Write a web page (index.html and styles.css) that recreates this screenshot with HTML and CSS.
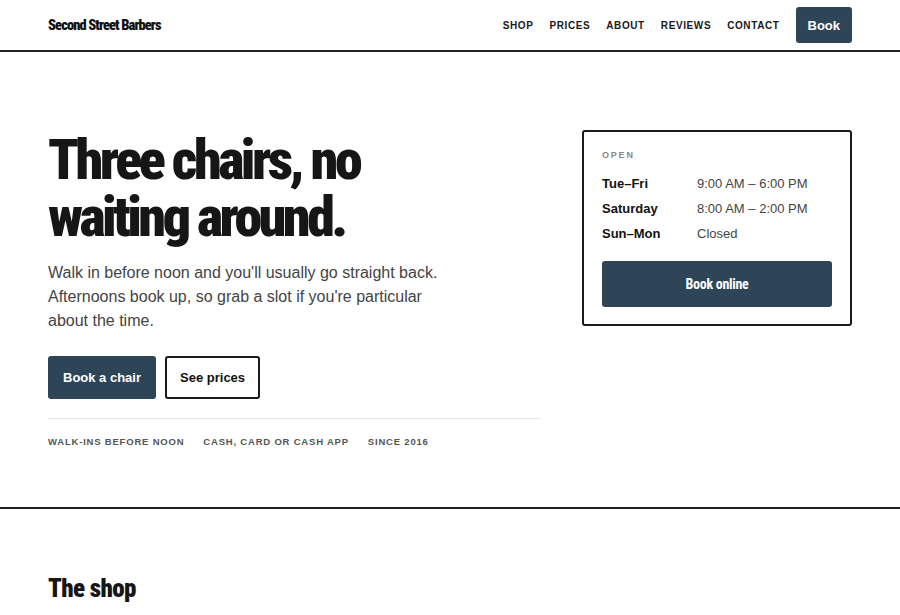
FILE: index.html
```html
<!DOCTYPE html>
<html lang="en">
<head>
<meta charset="utf-8">
<title>Second Street Barbers</title>
<link rel="stylesheet" href="styles.css">
</head>
<body>
<header class="site-header">
  <div class="container header-inner">
    <a class="logo" href="#">Second Street Barbers</a>
    <nav class="nav">
      <a href="#">Shop</a>
      <a href="#">Prices</a>
      <a href="#">About</a>
      <a href="#">Reviews</a>
      <a href="#">Contact</a>
      <a class="btn btn-primary btn-small" href="#">Book</a>
    </nav>
  </div>
</header>

<section class="hero">
  <div class="container hero-grid">
    <div class="hero-main">
      <h1 class="hero-title">Three chairs, no waiting around.</h1>
      <p class="hero-lead">Walk in before noon and you'll usually go straight back. Afternoons book up, so grab a slot if you're particular about the time.</p>
      <div class="hero-actions">
        <a class="btn btn-primary" href="#">Book a chair</a>
        <a class="btn btn-outline" href="#">See prices</a>
      </div>
      <ul class="hero-tags">
        <li>Walk-ins before noon</li>
        <li>Cash, card or Cash App</li>
        <li>Since 2016</li>
      </ul>
    </div>
    <aside class="hours-card">
      <div class="hours-label">Open</div>
      <dl class="hours-list">
        <div class="hours-row"><dt>Tue–Fri</dt><dd>9:00 AM – 6:00 PM</dd></div>
        <div class="hours-row"><dt>Saturday</dt><dd>8:00 AM – 2:00 PM</dd></div>
        <div class="hours-row"><dt>Sun–Mon</dt><dd>Closed</dd></div>
      </dl>
      <a class="btn btn-primary btn-block" href="#">Book online</a>
    </aside>
  </div>
</section>

<section class="shop">
  <div class="container">
    <h2 class="section-title">The shop</h2>
  </div>
</section>
</body>
</html>
```

FILE: styles.css
```css
* { box-sizing: border-box; }
html, body { margin: 0; padding: 0; }
body {
  font-family: "Liberation Sans", Arial, sans-serif;
  color: #1a1a1a;
  background: #fff;
}
a { text-decoration: none; color: inherit; }

.container {
  width: 804px;
  margin: 0 auto;
}

.site-header {
  border-bottom: 2px solid #222;
}
.header-inner {
  height: 50px;
  display: flex;
  align-items: center;
  justify-content: space-between;
}
.logo {
  font-family: "Roboto Condensed", "DejaVu Sans Condensed", sans-serif;
  font-weight: 900;
  font-size: 14.5px;
  letter-spacing: -0.9px;
  color: #111;
}
.nav {
  display: flex;
  align-items: center;
  gap: 16px;
}
.nav a {
  font-size: 10px;
  font-weight: 700;
  letter-spacing: 0.6px;
  text-transform: uppercase;
  color: #1a1a1a;
}

.btn {
  display: inline-flex;
  align-items: center;
  justify-content: center;
  font-size: 13px;
  font-weight: 700;
  border-radius: 3px;
}
.btn-primary {
  background: #2d4556;
  color: #fff;
}
.nav .btn-small {
  height: 36px;
  padding: 0 12px;
  font-size: 13px;
  letter-spacing: 0;
  text-transform: none;
  color: #fff;
}
.btn-outline {
  border: 2px solid #1a1a1a;
  color: #111;
  background: #fff;
}

.hero {
  padding: 80px 0 59px;
  border-bottom: 2px solid #222;
}
.hero-grid {
  display: grid;
  grid-template-columns: 492px 270px;
  column-gap: 42px;
  align-items: start;
}
.hero-title {
  margin: 0;
  font-family: "Roboto Condensed", "DejaVu Sans Condensed", sans-serif;
  font-weight: 900;
  font-size: 56px;
  line-height: 57px;
  letter-spacing: -3.5px;
  color: #161616;
  max-width: 340px;
}
.hero-lead {
  margin: 15px 0 0;
  font-size: 16px;
  line-height: 24px;
  color: #444;
  max-width: 400px;
}
.hero-actions {
  display: flex;
  gap: 9px;
  margin-top: 23px;
}
.hero-actions .btn {
  height: 43px;
  padding: 0 15px;
}
.hero-actions .btn-outline {
  padding: 0 13px;
}
.hero-tags {
  list-style: none;
  margin: 19px 0 0;
  padding: 17px 0 0;
  border-top: 1px solid #e6e6e6;
  display: flex;
  gap: 19px;
  line-height: 12px;
}
.hero-tags li {
  font-size: 9.5px;
  font-weight: 700;
  letter-spacing: 0.8px;
  text-transform: uppercase;
  color: #555;
}

.hours-card {
  border: 2px solid #1a1a1a;
  border-radius: 3px;
  padding: 18px 18px 17px;
  margin-top: -2px;
}
.hours-label {
  font-size: 9px;
  font-weight: 700;
  letter-spacing: 1.8px;
  text-transform: uppercase;
  color: #888;
}
.hours-list {
  margin: 11px 0 0;
}
.hours-row {
  display: grid;
  grid-template-columns: 95px 1fr;
  line-height: 25px;
  font-size: 13px;
}
.hours-row dt {
  font-weight: 700;
  color: #111;
}
.hours-row dd {
  margin: 0;
  color: #444;
}
.btn-block {
  display: flex;
  width: 100%;
  height: 46px;
  margin-top: 15px;
  font-family: "Roboto Condensed", "DejaVu Sans Condensed", sans-serif;
  font-size: 14px;
  letter-spacing: -0.3px;
}

.shop {
  padding: 65px 0 40px;
}
.section-title {
  margin: 0;
  font-family: "Roboto Condensed", "DejaVu Sans Condensed", sans-serif;
  font-weight: 900;
  font-size: 25px;
  line-height: 29px;
  letter-spacing: -0.6px;
  color: #161616;
}
```
